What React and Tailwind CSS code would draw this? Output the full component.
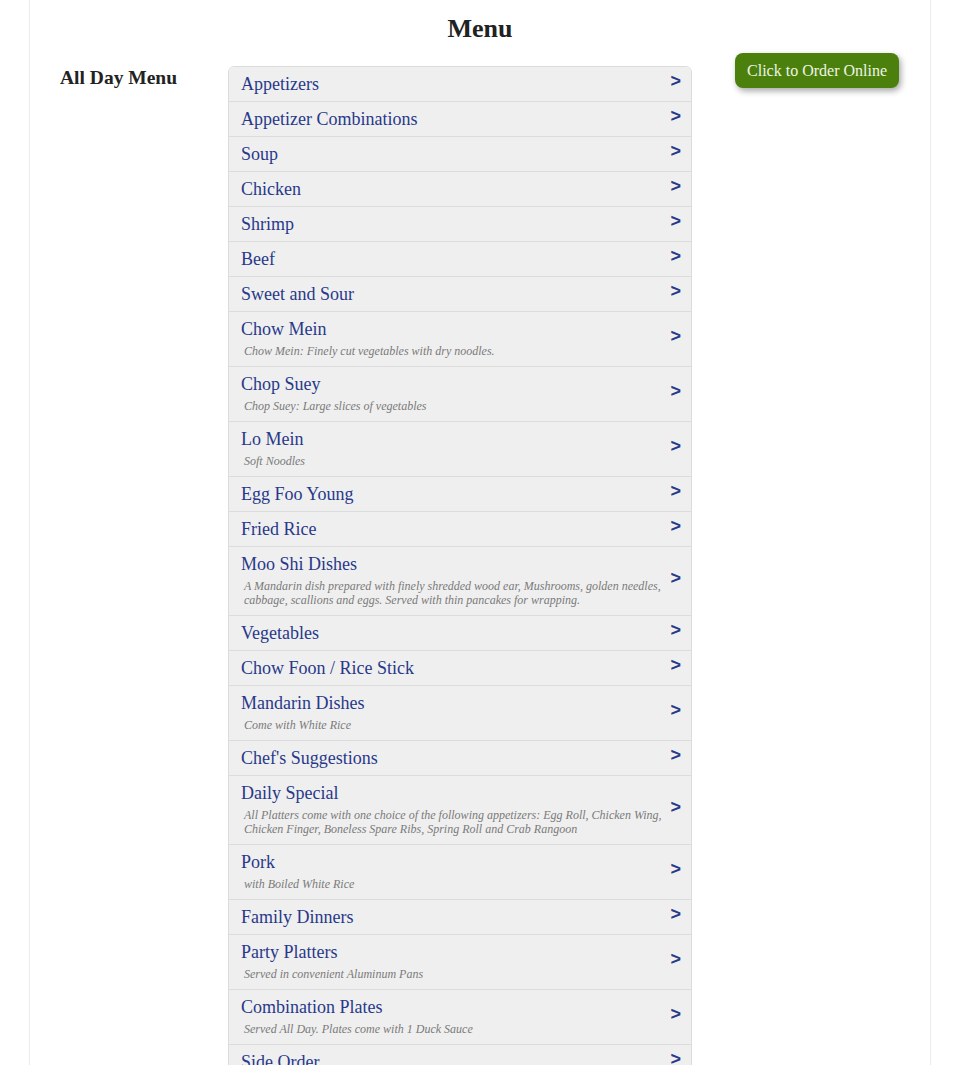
const items = [
  { name: 'Appetizers' },
  { name: 'Appetizer Combinations' },
  { name: 'Soup' },
  { name: 'Chicken' },
  { name: 'Shrimp' },
  { name: 'Beef' },
  { name: 'Sweet and Sour' },
  { name: 'Chow Mein', desc: 'Chow Mein: Finely cut vegetables with dry noodles.' },
  { name: 'Chop Suey', desc: 'Chop Suey: Large slices of vegetables' },
  { name: 'Lo Mein', desc: 'Soft Noodles' },
  { name: 'Egg Foo Young' },
  { name: 'Fried Rice' },
  {
    name: 'Moo Shi Dishes',
    desc: 'A Mandarin dish prepared with finely shredded wood ear, Mushrooms, golden needles, cabbage, scallions and eggs. Served with thin pancakes for wrapping.',
  },
  { name: 'Vegetables' },
  { name: 'Chow Foon / Rice Stick' },
  { name: 'Mandarin Dishes', desc: 'Come with White Rice' },
  { name: "Chef's Suggestions" },
  {
    name: 'Daily Special',
    desc: 'All Platters come with one choice of the following appetizers: Egg Roll, Chicken Wing, Chicken Finger, Boneless Spare Ribs, Spring Roll and Crab Rangoon',
  },
  { name: 'Pork', desc: 'with Boiled White Rice' },
  { name: 'Family Dinners' },
  { name: 'Party Platters', desc: 'Served in convenient Aluminum Pans' },
  { name: 'Combination Plates', desc: 'Served All Day. Plates come with 1 Duck Sauce' },
  { name: 'Side Order' },
];

function MenuRow({ item, first }) {
  return (
    <div
      className={`flex items-center bg-[#efefef] pl-[12px] pr-[10px] pt-[7px] ${
        item.desc ? 'pb-[8px]' : 'pb-[7px]'
      } ${first ? '' : 'border-t border-[#dcdcdc]'}`}
    >
      <div className="flex-1 pr-[8px]">
        <div className="text-[18px] leading-[20px] text-[#28398a]">{item.name}</div>
        {item.desc && (
          <div className="mt-[5px] pl-[3px] text-[12px] leading-[14px] italic text-[#7a7a7a]">
            {item.desc}
          </div>
        )}
      </div>
      {/* glyph sits a few px above the row's centre */}
      <span className="-mt-[6px] block font-['Liberation_Sans',Arial,sans-serif] text-[18px] font-bold leading-[20px] text-[#28398a]">
        &gt;
      </span>
    </div>
  );
}

export default function App() {
  return (
    <div className="min-h-[1065px] bg-white font-['Liberation_Serif','Times_New_Roman',serif] text-[#222]">
      <div className="mx-[29px] min-h-[1065px] border-x border-[#ececec]">
        <h1 className="pt-[13px] text-center text-[26px] font-bold leading-[32px] text-[#222]">Menu</h1>
        <div className="mt-[21px] flex items-start">
          <div className="w-[198px] shrink-0 pl-[30px] pt-[1px]">
            <h3 className="text-[19.5px] font-bold leading-[22px] text-[#222]">All Day Menu</h3>
          </div>
          <div className="w-[464px] shrink-0 overflow-hidden rounded-t-[6px] border border-[#dcdcdc]">
            {items.map((item, i) => (
              <MenuRow key={item.name} item={item} first={i === 0} />
            ))}
          </div>
          <div className="flex flex-1 justify-end pr-[31px]">
            <button className="-mt-[13px] h-[35px] rounded-[8px] bg-[#4b800d] px-[12px] text-[16px] leading-[20px] text-[#eef5e6] shadow-[2px_3px_6px_rgba(0,0,0,0.35)]">
              Click to Order Online
            </button>
          </div>
        </div>
      </div>
    </div>
  );
}
